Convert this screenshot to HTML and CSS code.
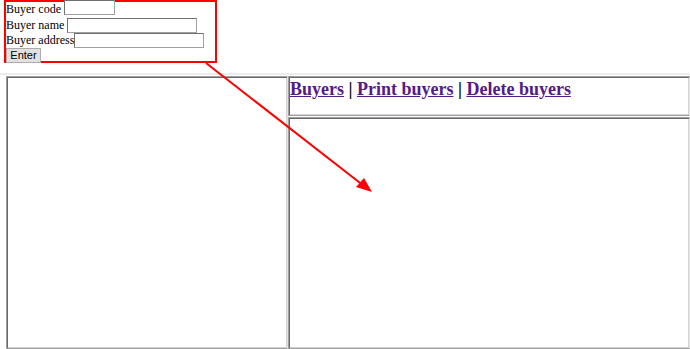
FILE: index.html
```html
<!DOCTYPE html>
<html>
<head>
  <title>Buyers</title>
  <link rel="stylesheet" href="styles.css">
</head>
<body>
  <!-- Top frame: buyer entry form -->
  <div class="top-frame">
    <form class="buyer-form">
      <div class="form-row">Buyer code <input type="text" class="input-code"></div>
      <div class="form-row">Buyer name <input type="text" class="input-name"></div>
      <div class="form-row">Buyer address<input type="text" class="input-address"></div>
      <div class="form-row"><button type="button" class="enter-button">Enter</button></div>
    </form>
  </div>

  <!-- Lower frames -->
  <div class="frames">
    <div class="frame left-frame"></div>
    <div class="right-column">
      <div class="frame menu-frame">
        <a href="#" class="menu-link">Buyers</a> | <a href="#" class="menu-link">Print buyers</a> | <a href="#" class="menu-link">Delete buyers</a>
      </div>
      <div class="frame content-frame"></div>
    </div>
  </div>

  <!-- Annotation arrow -->
  <svg class="arrow" width="690" height="349" viewBox="0 0 690 349">
    <line x1="206" y1="63" x2="364" y2="186" stroke="#ff0000" stroke-width="2"/>
    <polygon points="372,192 356,187 364,178" fill="#ff0000"/>
  </svg>
</body>
</html>
```

FILE: styles.css
```css
/* Page */
body {
  margin: 0;
  width: 690px;
  height: 349px;
  overflow: hidden;
  position: relative;
  background-color: #fff;
  font-family: "Liberation Serif", "Times New Roman", serif;
  font-size: 12px;
  color: #000;
}

/* Top frame */
.top-frame {
  height: 73px;
  padding-left: 4px;
  box-sizing: border-box;
}
.buyer-form {
  margin: 0;
  width: 213px;
  height: 63px;
  border: 2px solid #ff0000;
  box-sizing: border-box;
}
.form-row {
  height: 15.5px;
  line-height: 15px;
  white-space: nowrap;
}
.form-row input {
  height: 15px;
  padding: 0;
  margin: 0;
  box-sizing: border-box;
  border: 1px solid #a0a0a0;
  border-top-color: #707070;
  border-left-color: #707070;
  vertical-align: top;
  font-size: 11px;
}
.input-code {
  width: 51px;
  margin-top: -2px !important;
}
.input-name {
  width: 130px;
}
.input-address {
  width: 130px;
}
.enter-button {
  width: 35px;
  height: 15px;
  margin-top: -1px;
  padding: 0;
  font-family: "Liberation Sans", Arial, sans-serif;
  font-size: 11px;
  line-height: 12px;
  background-color: #e1e1e1;
  border: 1px solid #adadad;
  color: #000;
  vertical-align: top;
}

/* Frames */
.frames {
  display: grid;
  grid-template-columns: 282px 1fr;
  height: 276px;
  padding-left: 6px;
  padding-top: 1px;
  border-top: 2px solid #ececec;
  box-sizing: border-box;
}
.frame {
  box-sizing: border-box;
  border: 1px solid;
  border-color: #a0a0a0 #e3e3e3 #a0a0a0 #a0a0a0;
  box-shadow: inset 1px 1px #696969, inset -1px -1px #d4d4d4;
  background-color: #fff;
}
.right-column {
  display: flex;
  flex-direction: column;
  gap: 1px;
}
.menu-frame {
  height: 40px;
  padding: 1px 0 0 1px;
  font-size: 18px;
  font-weight: bold;
  line-height: 22px;
}
.menu-link {
  color: #551a8b;
  text-decoration: underline;
}
.content-frame {
  flex-grow: 1;
}

/* Annotation */
.arrow {
  position: absolute;
  left: 0;
  top: 0;
  pointer-events: none;
}
```
